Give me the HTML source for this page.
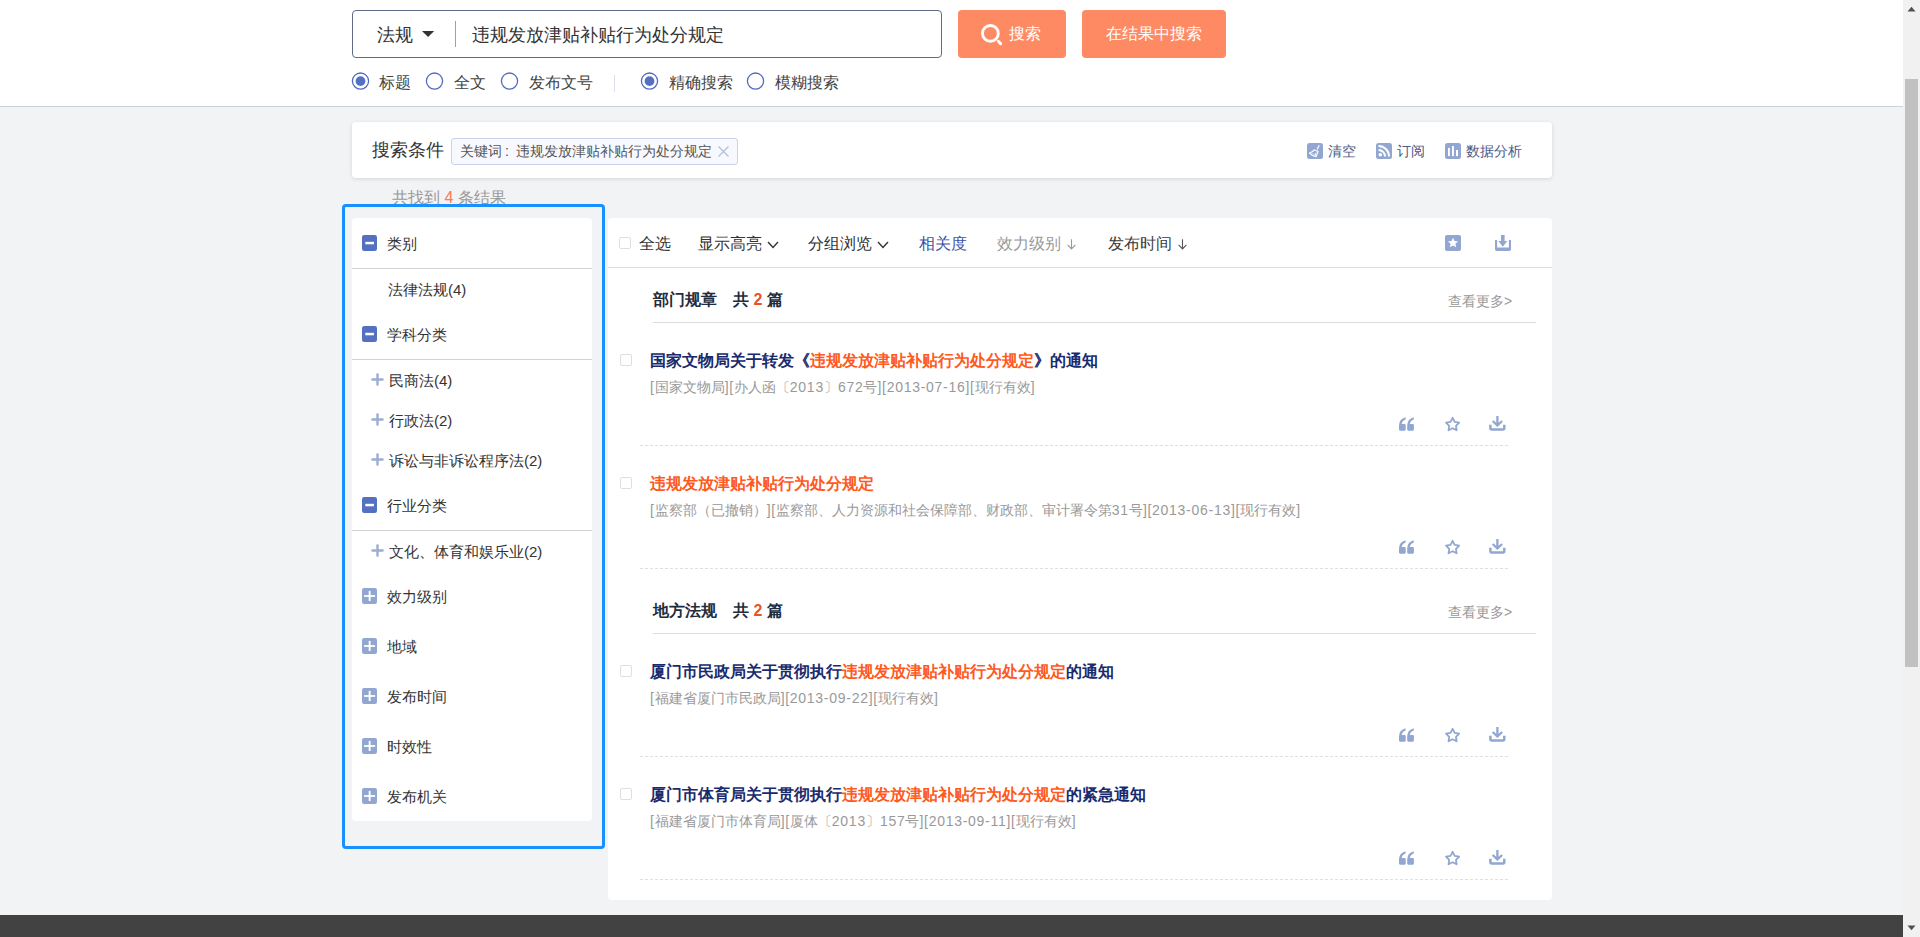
<!DOCTYPE html>
<html><head><meta charset="utf-8">
<style>
*{box-sizing:border-box;margin:0;padding:0}
html,body{width:1920px;height:937px;overflow:hidden;background:#f2f3f5;font-family:"Liberation Sans",sans-serif;color:#333}
.abs{position:absolute}
#header{position:absolute;left:0;top:0;width:1903px;height:107px;background:#fff;border-bottom:1px solid #cdd1de}
#footer{position:absolute;left:0;top:915px;width:1903px;height:22px;background:#424242}
#sb{position:absolute;left:1903px;top:0;width:17px;height:937px;background:#f1f1f1}
#sb .thumb{position:absolute;left:2px;top:79px;width:13px;height:588px;background:#c1c1c1}
.searchbox{left:352px;top:10px;width:590px;height:48px;border:1px solid #5f6b87;border-radius:4px;background:#fff}
.btn{top:10px;height:48px;background:#fd8a62;border-radius:4px;color:#fff;font-size:16px;line-height:48px}
.radio{width:17px;height:17px;border:1px solid #5a6fc4;border-radius:50%;background:#fff}
.radio.on:after{content:"";position:absolute;left:3px;top:3px;width:9px;height:9px;border-radius:50%;background:#5470c6}
.rtxt{font-size:16px;line-height:20px;color:#444}
.card{background:#fff;border-radius:4px}
.srow{position:relative;height:50px}
.irow{position:relative;height:40px}
.cb{width:12px;height:12px;border:1px solid #dcdfe6;border-radius:2px;background:#fff}
.ttx{font-size:16px;line-height:20px;color:#333;white-space:nowrap}
.sec{font-size:16px;line-height:20px;font-weight:bold;color:#1f2d3d;white-space:nowrap}
.more{font-size:14px;line-height:20px;color:#999;white-space:nowrap}
.tit{font-size:16px;line-height:20px;font-weight:bold;color:#1a2b6d;white-space:nowrap}
.meta{font-size:14px;line-height:20px;color:#999;white-space:nowrap}
.dash{width:870px;height:1px;background:repeating-linear-gradient(90deg,#dcdfe6 0 3px,transparent 3px 5px)}
.n{letter-spacing:0.72px}
.stx{font-size:15px;line-height:20px;color:#333;white-space:nowrap}
</style></head><body>
<div id="header">
  <div class="abs searchbox">
    <div class="abs" style="left:24px;top:12px;font-size:18px;line-height:24px;color:#333">法规</div>
    <svg class="abs" style="left:69px;top:20px" width="13" height="8" viewBox="0 0 13 8"><path d="M0 0.1H12.2L6.1 6Z" fill="#333"/></svg>
    <div class="abs" style="left:102px;top:10px;width:1px;height:26px;background:#f7835a"></div>
    <div class="abs" style="left:119px;top:12px;font-size:18px;line-height:24px;color:#333">违规发放津贴补贴行为处分规定</div>
  </div>
  <div class="abs btn" style="left:958px;width:108px">
    <svg class="abs" style="left:22px;top:13px" width="24" height="24" viewBox="0 0 24 24"><circle cx="10.4" cy="10.4" r="7.9" fill="none" stroke="#fff" stroke-width="2.9"/><path d="M18.3 18.3L20.6 20.6" stroke="#fff" stroke-width="3" stroke-linecap="round"/></svg>
    <span class="abs" style="left:51px;top:0">搜索</span>
  </div>
  <div class="abs btn" style="left:1082px;width:144px;text-align:center">在结果中搜索</div>

  <svg class="abs" style="left:351px;top:72px" width="19" height="19" viewBox="0 0 19 19"><circle cx="9.5" cy="9.1" r="8.1" fill="#fff" stroke="#5469c0" stroke-width="1.3"/><circle cx="9.5" cy="9.1" r="4.9" fill="#5470c2"/></svg>
  <div class="abs rtxt" style="left:379px;top:73px">标题</div>
  <svg class="abs" style="left:425px;top:72px" width="19" height="19" viewBox="0 0 19 19"><circle cx="9.5" cy="9.1" r="8.1" fill="#fff" stroke="#5469c0" stroke-width="1.3"/></svg>
  <div class="abs rtxt" style="left:454px;top:73px">全文</div>
  <svg class="abs" style="left:500px;top:72px" width="19" height="19" viewBox="0 0 19 19"><circle cx="9.5" cy="9.1" r="8.1" fill="#fff" stroke="#5469c0" stroke-width="1.3"/></svg>
  <div class="abs rtxt" style="left:529px;top:73px">发布文号</div>
  <div class="abs" style="left:614px;top:75px;width:1px;height:17px;background:#dde0ea"></div>
  <svg class="abs" style="left:640px;top:72px" width="19" height="19" viewBox="0 0 19 19"><circle cx="9.5" cy="9.1" r="8.1" fill="#fff" stroke="#5469c0" stroke-width="1.3"/><circle cx="9.5" cy="9.1" r="4.9" fill="#5470c2"/></svg>
  <div class="abs rtxt" style="left:669px;top:73px">精确搜索</div>
  <svg class="abs" style="left:746px;top:72px" width="19" height="19" viewBox="0 0 19 19"><circle cx="9.5" cy="9.1" r="8.1" fill="#fff" stroke="#5469c0" stroke-width="1.3"/></svg>
  <div class="abs rtxt" style="left:775px;top:73px">模糊搜索</div>
</div>

<!-- conditions card -->
<div class="abs card" style="left:352px;top:122px;width:1200px;height:56px;box-shadow:0 1px 4px rgba(0,0,0,0.12)">
  <div class="abs" style="left:20px;top:16px;font-size:18px;line-height:24px;color:#333">搜索条件</div>
  <div class="abs" style="left:99px;top:16px;width:287px;height:27px;border:1px solid #c9d3f0;border-radius:3px;background:#f7f9ff">
    <div class="abs" style="left:8px;top:2px;font-size:14px;line-height:20px;color:#555;white-space:nowrap">关键词<span style="display:inline-block;width:14px;padding-left:3px">:</span>违规发放津贴补贴行为处分规定</div>
    <svg class="abs" style="left:265px;top:6px" width="13" height="13" viewBox="0 0 13 13"><path d="M1.5 1.5L11.5 11.5M11.5 1.5L1.5 11.5" stroke="#b5bfd9" stroke-width="1.3"/></svg>
  </div>
  <svg class="abs" style="left:955px;top:21px" width="16" height="16" viewBox="0 0 16 16"><rect width="16" height="16" rx="2.5" fill="#91a6d1"/><path d="M12.2 2.2L10.1 6.6" stroke="#fff" stroke-width="1.2"/><path d="M7.3 6.9L11.2 8.6L9 13.8Q5.2 12.9 2.4 10.1Q5.6 9.3 7.3 6.9Z" fill="none" stroke="#fff" stroke-width="1.1" stroke-linejoin="round"/><path d="M5.3 10.4L4.3 11.9M7.2 10.8L6.3 12.9M9.2 9.5L8 13" stroke="#fff" stroke-width="0.9"/></svg>
  <div class="abs" style="left:976px;top:19px;font-size:14px;line-height:20px;color:#4b5a86">清空</div>
  <svg class="abs" style="left:1024px;top:21px" width="16" height="16" viewBox="0 0 16 16"><rect width="16" height="16" rx="2.5" fill="#91a6d1"/><circle cx="4.3" cy="11.7" r="1.8" fill="#fff"/><path d="M2.5 7A6.5 6.5 0 0 1 9 13.5" fill="none" stroke="#fff" stroke-width="2"/><path d="M2.5 3A10.5 10.5 0 0 1 13 13.5" fill="none" stroke="#fff" stroke-width="2"/></svg>
  <div class="abs" style="left:1045px;top:19px;font-size:14px;line-height:20px;color:#4b5a86">订阅</div>
  <svg class="abs" style="left:1093px;top:21px" width="16" height="16" viewBox="0 0 16 16"><rect width="16" height="16" rx="2.5" fill="#91a6d1"/><rect x="3" y="4.9" width="1.9" height="8.2" fill="#fff"/><rect x="7" y="3" width="1.9" height="10.1" fill="#fff"/><rect x="11" y="7" width="2" height="6.1" fill="#fff"/></svg>
  <div class="abs" style="left:1114px;top:19px;font-size:14px;line-height:20px;color:#4b5a86">数据分析</div>
</div>

<div class="abs" style="left:392px;top:187px;font-size:16px;line-height:22px;color:#999">共找到 <span style="color:#fd7a52">4</span> 条结果</div>

<!-- sidebar -->
<div class="abs card" style="left:352px;top:218px;width:240px;height:603px">
<div class="srow" style="height:51px;border-bottom:1px solid #d3d3d3;"><svg class="abs ic" style="left:10px;top:17px" width="15" height="16" viewBox="0 0 15 16" preserveAspectRatio="none"><rect width="15" height="16" rx="2.2" fill="#5470c0"/><rect x="3.3" y="6.8" width="8.6" height="2.5" fill="#fff"/></svg><span class="abs stx" style="left:35px;top:16px">类别</span></div>
<div class="irow"><span class="abs stx" style="left:36px;top:11px">法律法规(4)</span></div>
<div class="srow" style="height:51px;border-bottom:1px solid #d3d3d3;"><svg class="abs ic" style="left:10px;top:17px" width="15" height="16" viewBox="0 0 15 16" preserveAspectRatio="none"><rect width="15" height="16" rx="2.2" fill="#5470c0"/><rect x="3.3" y="6.8" width="8.6" height="2.5" fill="#fff"/></svg><span class="abs stx" style="left:35px;top:16px">学科分类</span></div>
<div class="irow"><svg class="abs" style="left:19px;top:13px" width="13" height="13" viewBox="0 0 13 13"><rect x="0.3" y="5.3" width="12.4" height="2.4" rx="1" fill="#9badd5"/><rect x="5.3" y="0.3" width="2.4" height="12.4" rx="1" fill="#9badd5"/></svg><span class="abs stx" style="left:37px;top:11px">民商法(4)</span></div>
<div class="irow"><svg class="abs" style="left:19px;top:13px" width="13" height="13" viewBox="0 0 13 13"><rect x="0.3" y="5.3" width="12.4" height="2.4" rx="1" fill="#9badd5"/><rect x="5.3" y="0.3" width="2.4" height="12.4" rx="1" fill="#9badd5"/></svg><span class="abs stx" style="left:37px;top:11px">行政法(2)</span></div>
<div class="irow"><svg class="abs" style="left:19px;top:13px" width="13" height="13" viewBox="0 0 13 13"><rect x="0.3" y="5.3" width="12.4" height="2.4" rx="1" fill="#9badd5"/><rect x="5.3" y="0.3" width="2.4" height="12.4" rx="1" fill="#9badd5"/></svg><span class="abs stx" style="left:37px;top:11px">诉讼与非诉讼程序法(2)</span></div>
<div class="srow" style="height:51px;border-bottom:1px solid #d3d3d3;"><svg class="abs ic" style="left:10px;top:17px" width="15" height="16" viewBox="0 0 15 16" preserveAspectRatio="none"><rect width="15" height="16" rx="2.2" fill="#5470c0"/><rect x="3.3" y="6.8" width="8.6" height="2.5" fill="#fff"/></svg><span class="abs stx" style="left:35px;top:16px">行业分类</span></div>
<div class="irow"><svg class="abs" style="left:19px;top:13px" width="13" height="13" viewBox="0 0 13 13"><rect x="0.3" y="5.3" width="12.4" height="2.4" rx="1" fill="#9badd5"/><rect x="5.3" y="0.3" width="2.4" height="12.4" rx="1" fill="#9badd5"/></svg><span class="abs stx" style="left:37px;top:11px">文化、体育和娱乐业(2)</span></div>
<div class="srow" style="height:50px;"><svg class="abs ic" style="left:10px;top:17px" width="15" height="16" viewBox="0 0 15 16" preserveAspectRatio="none"><rect width="15" height="16" rx="2.2" fill="#91a6d1"/><rect x="2.1" y="7.1" width="11" height="1.8" fill="#fff"/><rect x="6.7" y="2.9" width="1.9" height="10.1" fill="#fff"/></svg><span class="abs stx" style="left:35px;top:16px">效力级别</span></div>
<div class="srow" style="height:50px;"><svg class="abs ic" style="left:10px;top:17px" width="15" height="16" viewBox="0 0 15 16" preserveAspectRatio="none"><rect width="15" height="16" rx="2.2" fill="#91a6d1"/><rect x="2.1" y="7.1" width="11" height="1.8" fill="#fff"/><rect x="6.7" y="2.9" width="1.9" height="10.1" fill="#fff"/></svg><span class="abs stx" style="left:35px;top:16px">地域</span></div>
<div class="srow" style="height:50px;"><svg class="abs ic" style="left:10px;top:17px" width="15" height="16" viewBox="0 0 15 16" preserveAspectRatio="none"><rect width="15" height="16" rx="2.2" fill="#91a6d1"/><rect x="2.1" y="7.1" width="11" height="1.8" fill="#fff"/><rect x="6.7" y="2.9" width="1.9" height="10.1" fill="#fff"/></svg><span class="abs stx" style="left:35px;top:16px">发布时间</span></div>
<div class="srow" style="height:50px;"><svg class="abs ic" style="left:10px;top:17px" width="15" height="16" viewBox="0 0 15 16" preserveAspectRatio="none"><rect width="15" height="16" rx="2.2" fill="#91a6d1"/><rect x="2.1" y="7.1" width="11" height="1.8" fill="#fff"/><rect x="6.7" y="2.9" width="1.9" height="10.1" fill="#fff"/></svg><span class="abs stx" style="left:35px;top:16px">时效性</span></div>
<div class="srow" style="height:50px;"><svg class="abs ic" style="left:10px;top:17px" width="15" height="16" viewBox="0 0 15 16" preserveAspectRatio="none"><rect width="15" height="16" rx="2.2" fill="#91a6d1"/><rect x="2.1" y="7.1" width="11" height="1.8" fill="#fff"/><rect x="6.7" y="2.9" width="1.9" height="10.1" fill="#fff"/></svg><span class="abs stx" style="left:35px;top:16px">发布机关</span></div>
</div>

<!-- results -->
<div class="abs card" style="left:608px;top:218px;width:944px;height:682px">
<div class="abs cb" style="left:11px;top:19px"></div>
<div class="abs ttx" style="left:31px;top:16px">全选</div>
<div class="abs ttx" style="left:90px;top:16px">显示高亮</div><svg class="abs" style="left:159px;top:23px" width="12" height="8" viewBox="0 0 12 8"><path d="M1 1L6 6.5L11 1" fill="none" stroke="#333" stroke-width="1.4"/></svg>
<div class="abs ttx" style="left:200px;top:16px">分组浏览</div><svg class="abs" style="left:269px;top:23px" width="12" height="8" viewBox="0 0 12 8"><path d="M1 1L6 6.5L11 1" fill="none" stroke="#333" stroke-width="1.4"/></svg>
<div class="abs ttx" style="left:311px;top:16px;color:#3d4fa3">相关度</div>
<div class="abs ttx" style="left:389px;top:16px;color:#999">效力级别</div><svg class="abs" style="left:458px;top:19px" width="11" height="16" viewBox="0 0 11 16"><path d="M5.5 2.3V11.8M1.6 7.9L5.5 11.9L9.4 7.9" fill="none" stroke="#999" stroke-width="1.1"/></svg>
<div class="abs ttx" style="left:500px;top:16px;color:#3a3a3a">发布时间</div><svg class="abs" style="left:569px;top:19px" width="11" height="16" viewBox="0 0 11 16"><path d="M5.5 2.3V11.8M1.6 7.9L5.5 11.9L9.4 7.9" fill="none" stroke="#555" stroke-width="1.1"/></svg>
<svg class="abs" style="left:837px;top:17px" width="16" height="16" viewBox="0 0 16 16"><rect width="16" height="16" rx="2" fill="#91a6d1"/><path d="M8 2.8L9.5 6.1L13.1 6.4L10.4 8.7L11.2 12.3L8 10.4L4.8 12.3L5.6 8.7L2.9 6.4L6.5 6.1Z" fill="#fff"/></svg><svg class="abs" style="left:887px;top:17px" width="16" height="16" viewBox="0 0 16 16"><path d="M6 0H9.6V6H12.3L7.8 11.8L3.3 6H6Z" fill="#91a6d1"/><path d="M0 5H2.1V12.4H13.9V5H16V14.3Q16 16 14.3 16H1.7Q0 16 0 14.3Z" fill="#91a6d1"/></svg>
<div class="abs" style="left:0;top:49px;width:944px;height:1px;background:#dedede"></div>
<div class="abs sec" style="left:45px;top:72px">部门规章<span style="margin-left:16px">共 <span style="color:#e8542a">2</span> 篇</span></div>
<div class="abs more" style="left:840px;top:73px">查看更多&gt;</div>
<div class="abs" style="left:45px;top:104px;width:883px;height:1px;background:#dcdcdc"></div>
<div class="abs sec" style="left:45px;top:383px">地方法规<span style="margin-left:16px">共 <span style="color:#e8542a">2</span> 篇</span></div>
<div class="abs more" style="left:840px;top:384px">查看更多&gt;</div>
<div class="abs" style="left:45px;top:415px;width:883px;height:1px;background:#dcdcdc"></div>
<div class="abs cb" style="left:12px;top:136px"></div>
<div class="abs tit" style="left:42px;top:133px">国家文物局关于转发《<span style="color:#ff5a1e">违规发放津贴补贴行为处分规定</span>》的通知</div>
<div class="abs meta" style="left:42px;top:159px"><span class="n">[</span>国家文物局<span class="n">][</span>办人函〔<span class="n">2013</span>〕<span class="n">672</span>号<span class="n">][2013-07-16][</span>现行有效<span class="n">]</span></div>
<svg class="abs" style="left:791px;top:199px" width="15" height="14" viewBox="0 0 15 14"><path d="M0 8.2Q0.2 2 6.6 0.3V2.4Q3.1 3.6 2.7 7.1H5.6Q6.7 7.1 6.7 8.2V12.6Q6.7 13.7 5.6 13.7H1.1Q0 13.7 0 12.6Z" fill="#91a6d1"/><path d="M0 8.2Q0.2 2 6.6 0.3V2.4Q3.1 3.6 2.7 7.1H5.6Q6.7 7.1 6.7 8.2V12.6Q6.7 13.7 5.6 13.7H1.1Q0 13.7 0 12.6Z" transform="translate(8.2 0)" fill="#91a6d1"/></svg><svg class="abs" style="left:837px;top:198px" width="16" height="16" viewBox="0 0 16 16"><path d="M7.60 1.80L9.69 5.83L14.16 6.57L10.98 9.80L11.66 14.28L7.60 12.25L3.54 14.28L4.22 9.80L1.04 6.57L5.51 5.83Z" fill="none" stroke="#91a6d1" stroke-width="1.8" stroke-linejoin="round"/></svg><svg class="abs" style="left:881px;top:198px" width="17" height="16" viewBox="0 0 17 16"><path d="M8.4 0V9.4M3.7 5L8.4 9.5L13.1 5" fill="none" stroke="#91a6d1" stroke-width="2.3"/><path d="M1.4 8.8V12Q1.4 13.4 2.8 13.4H13.9Q15.3 13.4 15.3 12V8.8" fill="none" stroke="#91a6d1" stroke-width="2.5"/></svg>
<div class="abs dash" style="left:32px;top:227px"></div>
<div class="abs cb" style="left:12px;top:259px"></div>
<div class="abs tit" style="left:42px;top:256px"><span style="color:#ff5a1e">违规发放津贴补贴行为处分规定</span></div>
<div class="abs meta" style="left:42px;top:282px"><span class="n">[</span>监察部（已撤销）<span class="n">][</span>监察部、人力资源和社会保障部、财政部、审计署令第<span class="n">31</span>号<span class="n">][2013-06-13][</span>现行有效<span class="n">]</span></div>
<svg class="abs" style="left:791px;top:322px" width="15" height="14" viewBox="0 0 15 14"><path d="M0 8.2Q0.2 2 6.6 0.3V2.4Q3.1 3.6 2.7 7.1H5.6Q6.7 7.1 6.7 8.2V12.6Q6.7 13.7 5.6 13.7H1.1Q0 13.7 0 12.6Z" fill="#91a6d1"/><path d="M0 8.2Q0.2 2 6.6 0.3V2.4Q3.1 3.6 2.7 7.1H5.6Q6.7 7.1 6.7 8.2V12.6Q6.7 13.7 5.6 13.7H1.1Q0 13.7 0 12.6Z" transform="translate(8.2 0)" fill="#91a6d1"/></svg><svg class="abs" style="left:837px;top:321px" width="16" height="16" viewBox="0 0 16 16"><path d="M7.60 1.80L9.69 5.83L14.16 6.57L10.98 9.80L11.66 14.28L7.60 12.25L3.54 14.28L4.22 9.80L1.04 6.57L5.51 5.83Z" fill="none" stroke="#91a6d1" stroke-width="1.8" stroke-linejoin="round"/></svg><svg class="abs" style="left:881px;top:321px" width="17" height="16" viewBox="0 0 17 16"><path d="M8.4 0V9.4M3.7 5L8.4 9.5L13.1 5" fill="none" stroke="#91a6d1" stroke-width="2.3"/><path d="M1.4 8.8V12Q1.4 13.4 2.8 13.4H13.9Q15.3 13.4 15.3 12V8.8" fill="none" stroke="#91a6d1" stroke-width="2.5"/></svg>
<div class="abs dash" style="left:32px;top:350px"></div>
<div class="abs cb" style="left:12px;top:447px"></div>
<div class="abs tit" style="left:42px;top:444px">厦门市民政局关于贯彻执行<span style="color:#ff5a1e">违规发放津贴补贴行为处分规定</span>的通知</div>
<div class="abs meta" style="left:42px;top:470px"><span class="n">[</span>福建省厦门市民政局<span class="n">][2013-09-22][</span>现行有效<span class="n">]</span></div>
<svg class="abs" style="left:791px;top:510px" width="15" height="14" viewBox="0 0 15 14"><path d="M0 8.2Q0.2 2 6.6 0.3V2.4Q3.1 3.6 2.7 7.1H5.6Q6.7 7.1 6.7 8.2V12.6Q6.7 13.7 5.6 13.7H1.1Q0 13.7 0 12.6Z" fill="#91a6d1"/><path d="M0 8.2Q0.2 2 6.6 0.3V2.4Q3.1 3.6 2.7 7.1H5.6Q6.7 7.1 6.7 8.2V12.6Q6.7 13.7 5.6 13.7H1.1Q0 13.7 0 12.6Z" transform="translate(8.2 0)" fill="#91a6d1"/></svg><svg class="abs" style="left:837px;top:509px" width="16" height="16" viewBox="0 0 16 16"><path d="M7.60 1.80L9.69 5.83L14.16 6.57L10.98 9.80L11.66 14.28L7.60 12.25L3.54 14.28L4.22 9.80L1.04 6.57L5.51 5.83Z" fill="none" stroke="#91a6d1" stroke-width="1.8" stroke-linejoin="round"/></svg><svg class="abs" style="left:881px;top:509px" width="17" height="16" viewBox="0 0 17 16"><path d="M8.4 0V9.4M3.7 5L8.4 9.5L13.1 5" fill="none" stroke="#91a6d1" stroke-width="2.3"/><path d="M1.4 8.8V12Q1.4 13.4 2.8 13.4H13.9Q15.3 13.4 15.3 12V8.8" fill="none" stroke="#91a6d1" stroke-width="2.5"/></svg>
<div class="abs dash" style="left:32px;top:538px"></div>
<div class="abs cb" style="left:12px;top:570px"></div>
<div class="abs tit" style="left:42px;top:567px">厦门市体育局关于贯彻执行<span style="color:#ff5a1e">违规发放津贴补贴行为处分规定</span>的紧急通知</div>
<div class="abs meta" style="left:42px;top:593px"><span class="n">[</span>福建省厦门市体育局<span class="n">][</span>厦体〔<span class="n">2013</span>〕<span class="n">157</span>号<span class="n">][2013-09-11][</span>现行有效<span class="n">]</span></div>
<svg class="abs" style="left:791px;top:633px" width="15" height="14" viewBox="0 0 15 14"><path d="M0 8.2Q0.2 2 6.6 0.3V2.4Q3.1 3.6 2.7 7.1H5.6Q6.7 7.1 6.7 8.2V12.6Q6.7 13.7 5.6 13.7H1.1Q0 13.7 0 12.6Z" fill="#91a6d1"/><path d="M0 8.2Q0.2 2 6.6 0.3V2.4Q3.1 3.6 2.7 7.1H5.6Q6.7 7.1 6.7 8.2V12.6Q6.7 13.7 5.6 13.7H1.1Q0 13.7 0 12.6Z" transform="translate(8.2 0)" fill="#91a6d1"/></svg><svg class="abs" style="left:837px;top:632px" width="16" height="16" viewBox="0 0 16 16"><path d="M7.60 1.80L9.69 5.83L14.16 6.57L10.98 9.80L11.66 14.28L7.60 12.25L3.54 14.28L4.22 9.80L1.04 6.57L5.51 5.83Z" fill="none" stroke="#91a6d1" stroke-width="1.8" stroke-linejoin="round"/></svg><svg class="abs" style="left:881px;top:632px" width="17" height="16" viewBox="0 0 17 16"><path d="M8.4 0V9.4M3.7 5L8.4 9.5L13.1 5" fill="none" stroke="#91a6d1" stroke-width="2.3"/><path d="M1.4 8.8V12Q1.4 13.4 2.8 13.4H13.9Q15.3 13.4 15.3 12V8.8" fill="none" stroke="#91a6d1" stroke-width="2.5"/></svg>
<div class="abs dash" style="left:32px;top:661px"></div>
</div>

<!-- highlight -->
<div class="abs" style="left:342px;top:204px;width:263px;height:645px;border:3px solid #1890ff;border-radius:4px"></div>

<div id="footer"></div>
<div id="sb"><div class="thumb"></div>
<svg class="abs" style="left:4px;top:6px" width="9" height="6" viewBox="0 0 9 6"><path d="M0.5 5.5H8.5L4.5 0.8Z" fill="#505050"/></svg>
<svg class="abs" style="left:4px;top:925px" width="9" height="6" viewBox="0 0 9 6"><path d="M0.5 0.5H8.5L4.5 5.2Z" fill="#505050"/></svg>
</div>
</body></html>
